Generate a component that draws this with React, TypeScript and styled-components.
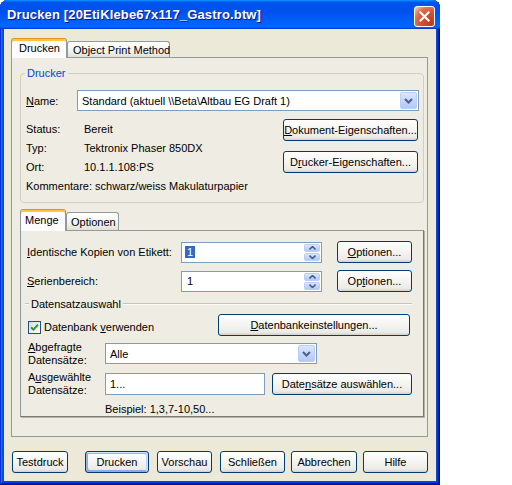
import React from "react";
import styled, { createGlobalStyle } from "styled-components";

const FONT = `"Liberation Sans", Arial, sans-serif`;

const GlobalStyle = createGlobalStyle`
  html, body { margin: 0; padding: 0; background: #ffffff; }
  body { font-family: ${FONT}; font-size: 11px; color: #000; }
  *, *::before, *::after { box-sizing: border-box; }
`;

const Window = styled.div`
  width: 440px;
  height: 485px;
  display: flex;
  flex-direction: column;
  padding: 0 4px 4px 4px;
  background: #0846d8;
  border-radius: 8px 8px 0 0;
  box-shadow: inset -1px -1px #00138c, inset 1px 1px #0831d9,
    inset -2px -2px #001ea0, inset 2px 2px #166aee, inset -3px -3px #003bda,
    inset 3px 3px #0855dd;
`;

const TitleBar = styled.div`
  height: 29px;
  margin: 0 -4px;
  padding: 0 5px 0 7px;
  display: flex;
  align-items: center;
  justify-content: space-between;
  border-radius: 8px 8px 0 0;
  background: linear-gradient(
    180deg,
    #0997ff,
    #0053ee 8%,
    #0050ee 40%,
    #0066ff 88%,
    #0066ff 93%,
    #005bff 95%,
    #003dd7 96%,
    #003dd7
  );
`;

const TitleText = styled.span`
  font: bold 13px ${FONT};
  color: #fff;
  letter-spacing: 0.15px;
  text-shadow: 1px 1px #0f1089;
  white-space: nowrap;
`;

const CloseButton = styled.div`
  width: 21px;
  height: 21px;
  margin-top: 4px;
  border: 1px solid #fff;
  border-radius: 3px;
  background: radial-gradient(
    circle at 85% 85%,
    #c13a1a 0,
    #d95535 50%,
    #e2704f 70%,
    #f4b7a2 92%,
    #fff 100%
  );
  display: flex;
  align-items: center;
  justify-content: center;
`;

const Client = styled.div`
  flex: 1;
  background: #ece9d8;
  padding: 9px 8px 0 7px;
  display: flex;
  flex-direction: column;
`;

const TabStrip = styled.div<{ $h: number; $mt?: number }>`
  display: flex;
  align-items: flex-end;
  height: ${(p) => p.$h}px;
  margin-top: ${(p) => p.$mt ?? 0}px;
  position: relative;
  z-index: 1;
`;

const Tab = styled.div<{ $active?: boolean; $w: number; $h: number; $pl: number }>`
  width: ${(p) => p.$w}px;
  height: ${(p) => p.$h}px;
  padding-left: ${(p) => p.$pl}px;
  padding-bottom: ${(p) => (p.$active ? 2 : 0)}px;
  margin-bottom: ${(p) => (p.$active ? -1 : 0)}px;
  display: flex;
  align-items: center;
  white-space: nowrap;
  border: 1px solid #919b9c;
  border-bottom: none;
  border-radius: 3px 3px 0 0;
  background: ${(p) =>
    p.$active
      ? "#fcfcfe"
      : "linear-gradient(180deg, #ffffff, #f3f3ef 60%, #e2e0d6)"};
  ${(p) =>
    p.$active
      ? "border-top-color: #e68b2c; box-shadow: inset 0 2px #ffc73c;"
      : ""}
`;

const Panel = styled.div`
  height: 380px;
  border: 1px solid #919b9c;
  background: #efede3;
  padding: 9px 3px 0 8px;
  display: flex;
  flex-direction: column;
`;

const Group = styled.fieldset`
  margin: 0;
  padding: 0 2px 7px 5px;
  border: 1px solid #d0d0bf;
  border-radius: 4px;
  min-width: 0;
`;

const Legend = styled.legend`
  padding: 0 2px;
  margin-left: -1px;
  color: #0046d5;
  font-size: 11px;
  line-height: 13px;
`;

const NameRow = styled.div`
  display: flex;
  align-items: center;
  margin-top: 10px;
  height: 21px;
`;

const FieldLabel = styled.span<{ $w?: number }>`
  ${(p) => (p.$w ? `width: ${p.$w}px;` : "margin-right: 3px;")}
  flex-shrink: 0;
  white-space: nowrap;
`;

const TwoLineLabel = styled.span<{ $w: number }>`
  width: ${(p) => p.$w}px;
  flex-shrink: 0;
  line-height: 13px;
  padding-left: 1px;
`;

const U = styled.span`
  text-decoration: underline;
  text-underline-offset: 1px;
`;

const Combo = styled.div<{ $w: number }>`
  width: ${(p) => p.$w}px;
  height: 21px;
  flex-shrink: 0;
  border: 1px solid #7f9db9;
  background: #fff;
  display: flex;
  align-items: center;
  padding: 0 1px 0 4px;
`;

const BoxText = styled.span`
  flex: 1;
  white-space: nowrap;
  overflow: hidden;
`;

const DropButton = styled.span`
  width: 17px;
  height: 17px;
  border-radius: 2px;
  border: 1px solid #bacdf6;
  background: linear-gradient(180deg, #dce7ff, #c5d5fc 50%, #b5c9f6);
  display: flex;
  align-items: center;
  justify-content: center;
`;

const InfoArea = styled.div`
  display: flex;
  justify-content: space-between;
  margin-top: 8px;
`;

const InfoList = styled.div`
  display: flex;
  flex-direction: column;
`;

const InfoRow = styled.div`
  display: flex;
  align-items: center;
  height: 19px;
  white-space: nowrap;
`;

const ButtonColumn = styled.div`
  display: flex;
  flex-direction: column;
  gap: 10px;
  margin-right: 3px;
`;

const Btn = styled.button<{ $w: number; $ml?: number; $default?: boolean }>`
  width: ${(p) => p.$w}px;
  height: 22px;
  flex-shrink: 0;
  margin: 0 0 0 ${(p) => p.$ml ?? 0}px;
  padding: 0;
  font: 11px ${FONT};
  color: #000;
  white-space: nowrap;
  border: 1px solid #003c74;
  border-radius: 3px;
  background: linear-gradient(180deg, #ffffff, #ecebe6 86%, #d6d0c5);
  display: flex;
  align-items: center;
  justify-content: center;
  box-shadow: ${(p) =>
    p.$default
      ? "inset -1px 1px #cee7ff, inset 1px 2px #98b8ea, inset -2px 2px #bcd4f6, inset 1px -1px #89ade4, inset 2px -2px #89ade4"
      : "none"};
`;

const SubPanel = styled.div`
  border: 1px solid #919b9c;
  border-right-color: #7b7a70;
  border-bottom-color: #7b7a70;
  box-shadow: 1px 1px 0 #b8b5a6;
  background: #efede3;
  display: flex;
  flex-direction: column;
`;

const FormRow = styled.div<{ $mt: number; $h: number; $pl?: number }>`
  display: flex;
  align-items: center;
  margin-top: ${(p) => p.$mt}px;
  height: ${(p) => p.$h}px;
  padding-left: ${(p) => p.$pl ?? 6}px;
`;

const Spin = styled.div`
  width: 141px;
  height: 21px;
  flex-shrink: 0;
  border: 1px solid #7f9db9;
  background: #fff;
  display: flex;
  align-items: stretch;
  padding: 1px;
`;

const SpinValue = styled.span`
  flex: 1;
  display: flex;
  align-items: center;
  padding-left: 2px;
`;

const Selected = styled.span<{ $on?: boolean }>`
  background: ${(p) => (p.$on ? "#316ac5" : "transparent")};
  color: ${(p) => (p.$on ? "#fff" : "#000")};
  padding: 0 2px;
  line-height: 12px;
`;

const SpinButtons = styled.div`
  width: 16px;
  display: flex;
  flex-direction: column;
  gap: 1px;
`;

const SpinButton = styled.span`
  flex: 1;
  border-radius: 2px;
  border: 1px solid #bacdf6;
  background: linear-gradient(180deg, #dce7ff, #c5d5fc 50%, #b5c9f6);
  display: flex;
  align-items: center;
  justify-content: center;
`;

const TextBox = styled.div<{ $w: number }>`
  width: ${(p) => p.$w}px;
  height: 22px;
  flex-shrink: 0;
  border: 1px solid #7f9db9;
  background: #fff;
  display: flex;
  align-items: center;
  padding-left: 4px;
`;

const SectionRow = styled.div`
  display: flex;
  align-items: center;
  margin-top: 5px;
  height: 13px;
  padding-left: 4px;
  margin-right: 11px;
`;

const SectionLine = styled.div<{ $w?: number }>`
  height: 2px;
  border-top: 1px solid #c7c4b4;
  border-bottom: 1px solid #fbfbf8;
  ${(p) => (p.$w ? `width: ${p.$w}px;` : "flex: 1;")}
`;

const SectionTitle = styled.span`
  padding: 0 2px;
  white-space: nowrap;
`;

const CheckGroup = styled.div`
  display: flex;
  align-items: center;
  margin-top: 4px;
  margin-left: 1px;
`;

const CheckBox = styled.span`
  width: 13px;
  height: 13px;
  border: 1px solid #1c5180;
  background: linear-gradient(135deg, #dcdcd7, #ffffff);
  display: flex;
  align-items: center;
  justify-content: center;
`;

const CheckText = styled.span`
  margin-left: 3px;
  white-space: nowrap;
`;

const RightButton = styled(Btn)`
  margin-left: auto;
  margin-right: 13px;
`;

const HintRow = styled.div`
  margin-top: 8px;
  line-height: 13px;
  padding-left: 84px;
`;

const Footer = styled.div`
  display: flex;
  margin-top: 14px;
  padding-left: 1px;
`;

const Chevron = () => (
  <svg width="9" height="6" viewBox="0 0 9 6">
    <path d="M1 1 L4.5 4.5 L8 1" fill="none" stroke="#4d6185" strokeWidth="2" />
  </svg>
);

const Arrow = ({ up }: { up?: boolean }) => (
  <svg width="7" height="4" viewBox="0 0 7 4">
    <path
      d={up ? "M0.5 3.5 L3.5 0.5 L6.5 3.5" : "M0.5 0.5 L3.5 3.5 L6.5 0.5"}
      fill="none"
      stroke="#4d6185"
      strokeWidth="1.6"
    />
  </svg>
);

const CloseX = () => (
  <svg width="11" height="11" viewBox="0 0 11 11">
    <path d="M1.5 1.5 L9.5 9.5 M9.5 1.5 L1.5 9.5" stroke="#fff" strokeWidth="2.2" strokeLinecap="square" />
  </svg>
);

const Check = () => (
  <svg width="9" height="9" viewBox="0 0 9 9">
    <path d="M1 4.2 L3.4 6.6 L8 1.6" fill="none" stroke="#21a121" strokeWidth="2" />
  </svg>
);

const SpinField = ({ value, selected }: { value: string; selected?: boolean }) => (
  <Spin>
    <SpinValue>
      <Selected $on={selected}>{value}</Selected>
    </SpinValue>
    <SpinButtons>
      <SpinButton>
        <Arrow up />
      </SpinButton>
      <SpinButton>
        <Arrow />
      </SpinButton>
    </SpinButtons>
  </Spin>
);

export default function App() {
  return (
    <>
      <GlobalStyle />
      <Window>
        <TitleBar>
          <TitleText>Drucken [20EtiKlebe67x117_Gastro.btw]</TitleText>
          <CloseButton>
            <CloseX />
          </CloseButton>
        </TitleBar>
        <Client>
          <TabStrip $h={19}>
            <Tab $active $w={56} $h={20} $pl={7}>
              Drucken
            </Tab>
            <Tab $w={103} $h={16} $pl={5}>
              Object Print Method
            </Tab>
          </TabStrip>
          <Panel>
            <Group>
              <Legend>Drucker</Legend>
              <NameRow>
                <FieldLabel $w={51}>
                  <U>N</U>ame:
                </FieldLabel>
                <Combo $w={342}>
                  <BoxText>{"Standard (aktuell \\\\Beta\\Altbau EG Draft 1)"}</BoxText>
                  <DropButton>
                    <Chevron />
                  </DropButton>
                </Combo>
              </NameRow>
              <InfoArea>
                <InfoList>
                  <InfoRow>
                    <FieldLabel $w={58}>Status:</FieldLabel>
                    <span>Bereit</span>
                  </InfoRow>
                  <InfoRow>
                    <FieldLabel $w={58}>Typ:</FieldLabel>
                    <span>Tektronix Phaser 850DX</span>
                  </InfoRow>
                  <InfoRow>
                    <FieldLabel $w={58}>Ort:</FieldLabel>
                    <span>10.1.1.108:PS</span>
                  </InfoRow>
                  <InfoRow>
                    <FieldLabel>Kommentare:</FieldLabel>
                    <span>schwarz/weiss Makulaturpapier</span>
                  </InfoRow>
                </InfoList>
                <ButtonColumn>
                  <Btn $w={135}>
                    <U>D</U>okument-Eigenschaften...
                  </Btn>
                  <Btn $w={135}>
                    D<U>r</U>ucker-Eigenschaften...
                  </Btn>
                </ButtonColumn>
              </InfoArea>
            </Group>

            <TabStrip $h={21} $mt={6}>
              <Tab $active $w={46} $h={22} $pl={4}>
                Menge
              </Tab>
              <Tab $w={53} $h={18} $pl={4}>
                Optionen
              </Tab>
            </TabStrip>
            <SubPanel>
              <FormRow $mt={10} $h={22}>
                <FieldLabel $w={154}>
                  <U>I</U>dentische Kopien von Etikett:
                </FieldLabel>
                <SpinField value="1" selected />
                <Btn $w={75} $ml={15}>
                  <U>O</U>ptionen...
                </Btn>
              </FormRow>
              <FormRow $mt={7} $h={22}>
                <FieldLabel $w={154}>
                  <U>S</U>erienbereich:
                </FieldLabel>
                <SpinField value="1" />
                <Btn $w={75} $ml={15}>
                  Op<U>t</U>ionen...
                </Btn>
              </FormRow>
              <SectionRow>
                <SectionLine $w={4} />
                <SectionTitle>Datensatzauswahl</SectionTitle>
                <SectionLine />
              </SectionRow>
              <FormRow $mt={4} $h={22}>
                <CheckGroup>
                  <CheckBox>
                    <Check />
                  </CheckBox>
                  <CheckText>
                    Datenbank <U>v</U>erwenden
                  </CheckText>
                </CheckGroup>
                <RightButton $w={192}>
                  <U>D</U>atenbankeinstellungen...
                </RightButton>
              </FormRow>
              <FormRow $mt={7} $h={21}>
                <TwoLineLabel $w={78}>
                  <U>A</U>bgefragte
                  <br />
                  Datensätze:
                </TwoLineLabel>
                <Combo $w={212}>
                  <BoxText>Alle</BoxText>
                  <DropButton>
                    <Chevron />
                  </DropButton>
                </Combo>
              </FormRow>
              <FormRow $mt={9} $h={22}>
                <TwoLineLabel $w={78}>
                  A<U>u</U>sgewählte
                  <br />
                  Datensätze:
                </TwoLineLabel>
                <TextBox $w={160}>1...</TextBox>
                <Btn $w={140} $ml={7}>
                  Date<U>n</U>sätze auswählen...
                </Btn>
              </FormRow>
              <HintRow>Beispiel: 1,3,7-10,50...</HintRow>
            </SubPanel>
          </Panel>
          <Footer>
            <Btn $w={56}>Testdruck</Btn>
            <Btn $w={64} $ml={17} $default>
              Drucken
            </Btn>
            <Btn $w={55} $ml={8}>
              Vorschau
            </Btn>
            <Btn $w={65} $ml={8}>
              Schließen
            </Btn>
            <Btn $w={66} $ml={6}>
              Abbrechen
            </Btn>
            <Btn $w={65} $ml={6}>
              Hilfe
            </Btn>
          </Footer>
        </Client>
      </Window>
    </>
  );
}
